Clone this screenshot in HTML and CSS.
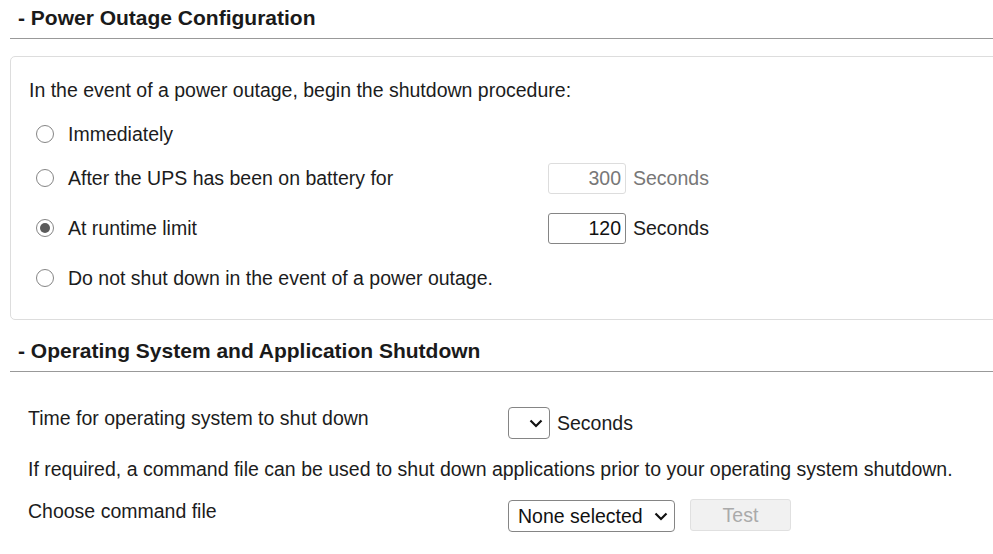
FILE: index.html
```html
<!DOCTYPE html>
<html>
<head>
<meta charset="utf-8">
<link rel="stylesheet" href="styles.css">
</head>
<body>
<div class="page">
  <div class="section-head"><h3>- Power Outage Configuration</h3></div>
  <div class="panel">
    <div class="intro">In the event of a power outage, begin the shutdown procedure:</div>
    <div class="row r1">
      <label class="opt"><span class="radio"></span>Immediately</label>
    </div>
    <div class="row r2">
      <label class="opt"><span class="radio"></span>After the UPS has been on battery for</label>
      <div class="field disabled"><span class="num">300</span><span class="unit">Seconds</span></div>
    </div>
    <div class="row r3">
      <label class="opt"><span class="radio checked"></span>At runtime limit</label>
      <div class="field"><span class="num">120</span><span class="unit">Seconds</span></div>
    </div>
    <div class="row r4">
      <label class="opt"><span class="radio"></span>Do not shut down in the event of a power outage.</label>
    </div>
  </div>

  <div class="section-head second"><h3>- Operating System and Application Shutdown</h3></div>
  <div class="os">
    <div class="os-row os1">
      <span class="os-label">Time for operating system to shut down</span>
      <div class="ctrl">
        <span class="select small"><svg class="chev" viewBox="0 0 14 9" width="14" height="9"><path d="M1.5 1.5 L7 7 L12.5 1.5" fill="none" stroke="#111" stroke-width="2.2"/></svg></span>
        <span class="unit dark">Seconds</span>
      </div>
    </div>
    <div class="note">If required, a command file can be used to shut down applications prior to your operating system shutdown.</div>
    <div class="os-row os3">
      <span class="os-label">Choose command file</span>
      <div class="ctrl">
        <span class="select wide">None selected<svg class="chev" viewBox="0 0 14 9" width="14" height="9"><path d="M1.5 1.5 L7 7 L12.5 1.5" fill="none" stroke="#111" stroke-width="2.2"/></svg></span>
        <span class="btn">Test</span>
      </div>
    </div>
  </div>
</div>
</body>
</html>
```

FILE: styles.css
```css
html, body {
  margin: 0;
  padding: 0;
  background: #fff;
  overflow: hidden;
}
body {
  font-family: "Liberation Sans", Arial, sans-serif;
  font-size: 19.5px;
  color: #1c1c1c;
  width: 993px;
  height: 554px;
}
.page {
  padding-left: 10px;
}
.section-head {
  height: 38px;
  border-bottom: 1px solid #999;
}
.section-head h3 {
  margin: 0;
  padding-left: 8px;
  font-size: 21px;
  font-weight: bold;
  line-height: 36px;
  color: #1a1a1a;
}
.section-head.second {
  margin-top: 13px;
  height: 38px;
}
.panel {
  margin-top: 17px;
  width: 1020px;
  border: 1px solid #ddd;
  border-radius: 5px;
  padding: 22px 0 26px 18px;
  box-sizing: border-box;
  height: 264px;
}
.intro {
  line-height: 22px;
}
.row {
  display: flex;
  align-items: center;
  height: 32px;
}
.r1 { margin-top: 17px; }
.r2 { margin-top: 12px; }
.r3 { margin-top: 18px; }
.r4 { margin-top: 18px; }
.opt {
  display: flex;
  align-items: center;
  width: 511px;
  padding-left: 8px;
}
.radio {
  width: 18px;
  height: 18px;
  border: 1px solid #858585;
  border-radius: 50%;
  margin-right: 13px;
  box-sizing: border-box;
  flex: none;
  position: relative;
  left: -1px;
}
.radio.checked::after {
  content: "";
  position: absolute;
  left: 3px;
  top: 3px;
  width: 10px;
  height: 10px;
  border-radius: 50%;
  background: #5a5a5a;
}
.field {
  display: flex;
  align-items: center;
}
.num {
  width: 78px;
  height: 31px;
  box-sizing: border-box;
  border: 1px solid #858585;
  border-radius: 3px;
  text-align: right;
  padding-right: 4px;
  line-height: 29px;
  color: #111;
}
.unit {
  margin-left: 7px;
  color: #1c1c1c;
}
.field.disabled .num {
  border-color: #ddd;
  color: #777;
}
.field.disabled .unit {
  color: #777;
}
.os {
  padding-left: 18px;
}
.os-row {
  display: flex;
  align-items: center;
  height: 32px;
}
.os1 { margin-top: 35px; }
.os-label {
  width: 480px;
  position: relative;
  top: -5px;
}
.ctrl {
  display: flex;
  align-items: center;
}
.select {
  height: 32px;
  box-sizing: border-box;
  border: 1px solid #858585;
  border-radius: 4px;
  display: flex;
  align-items: center;
  justify-content: flex-end;
  padding-right: 6px;
  color: #111;
}
.select.small {
  width: 42px;
}
.select.wide {
  width: 167px;
  justify-content: space-between;
  padding-left: 9px;
}
.unit.dark {
  color: #1c1c1c;
}
.note {
  margin-top: 19px;
  line-height: 22px;
}
.os3 { margin-top: 20px; }
.btn {
  margin-left: 15px;
  width: 101px;
  height: 32px;
  box-sizing: border-box;
  border: 1px solid #e0e0e0;
  border-radius: 3px;
  background: #f1f1f1;
  color: #aaa;
  text-align: center;
  line-height: 30px;
  position: relative;
  top: -1px;
}
```
